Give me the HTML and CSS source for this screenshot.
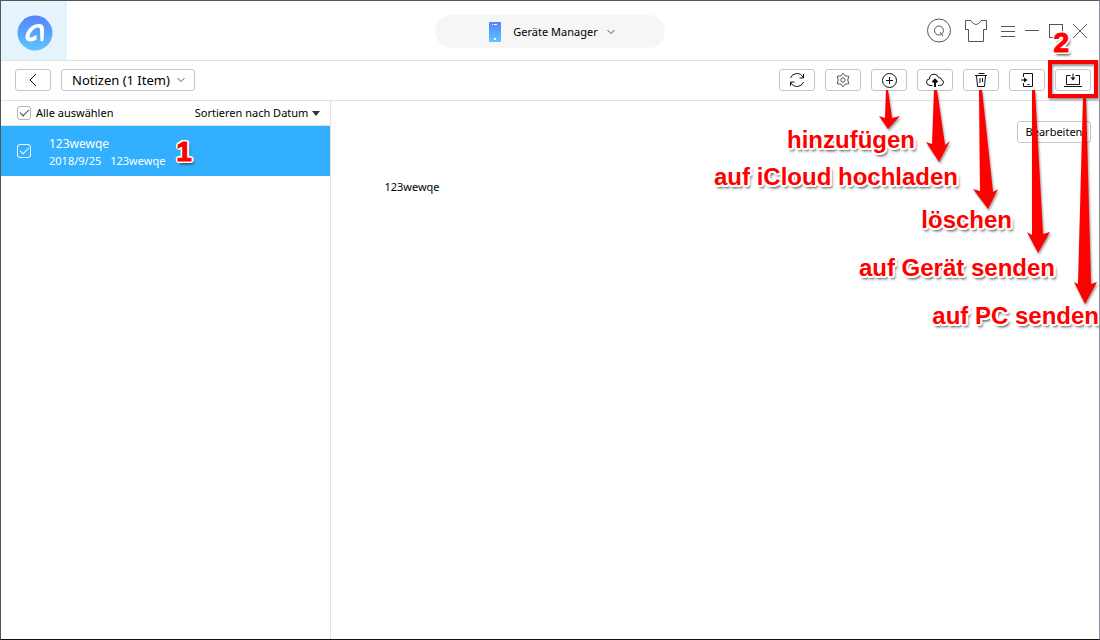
FILE: index.html
```
<!DOCTYPE html>
<html lang="de">
<head>
<meta charset="utf-8">
<title>Geräte Manager</title>
<link rel="stylesheet" href="styles.css">
</head>
<body>
<div class="window">
  <header class="titlebar">
    <div class="brand">
      <svg class="logo" viewBox="0 0 36 36" aria-hidden="true">
        <defs><linearGradient id="blue" x1="0" y1="0" x2="0" y2="1"><stop offset="0" stop-color="#5583fb"/><stop offset="1" stop-color="#5dc5ff"/></linearGradient></defs>
        <circle cx="18" cy="18" r="17.5" fill="url(#blue)"/>
        <path fill="#fff" fill-rule="evenodd" d="M8.500 22C9 15 15 9 22 9C25.500 9 27 11 27 15L26.500 25.500Q25.500 27 23.500 26L23 14Q22.500 12 20.500 12.500C16.500 13.500 13 18 12.500 21.500Q12.500 23 14 22.500L19.500 20V24.500Q16 27 12 26.300Q8 25.500 8.500 22Z"/>
      </svg>
    </div>
    <button class="device">
      <svg class="phone" viewBox="0 0 12 20" aria-hidden="true"><rect width="12" height="20" rx="1" fill="url(#blue)"/><path d="M3 2.500h1M5 2.500h3" stroke="#fff"/><rect x="5" y="16" width="2" height="2" fill="#fff"/></svg>
      <span>Geräte Manager</span>
      <svg class="chevron" viewBox="0 0 8 6" aria-hidden="true"><path d="M.5 1L4 4.500 7.500 1"/></svg>
    </button>
    <div class="window-tools">
      <button class="plain" aria-label="Konto"><svg width="26" height="26" viewBox="0 0 26 26"><circle cx="13" cy="12.500" r="11.500"/><circle cx="13" cy="12.500" r="4.500"/><path d="M14 14l3 4"/></svg></button>
      <button class="plain" aria-label="Design"><svg width="24" height="24" viewBox="0 0 24 24"><path d="M1.500 1.500H7Q9 5.500 12 5.500T17 1.500h5.500v9H19.500v12h-15v-12h-3z"/></svg></button>
      <button class="plain" aria-label="Menü"><svg width="16" height="16" viewBox="0 0 16 16"><path d="M1 3.500h14M1 8.500h14M1 13.500h14"/></svg></button>
      <button class="plain" aria-label="Minimieren"><svg width="16" height="16" viewBox="0 0 16 16"><path d="M1 7.500h14"/></svg></button>
      <button class="plain" aria-label="Maximieren"><svg width="16" height="16" viewBox="0 0 16 16"><rect x="1.500" y="1.500" width="13" height="13"/></svg></button>
      <button class="plain" aria-label="Schließen"><svg width="16" height="16" viewBox="0 0 16 16"><path d="M1 1l14 14M15 1L1 15"/></svg></button>
    </div>
  </header>

  <nav class="toolbar">
    <button class="tool" aria-label="Zurück"><svg viewBox="0 0 18 18"><path d="M12 3L6 9l6 6"/></svg></button>
    <button class="category"><span>Notizen (1 Item)</span><svg class="chevron" viewBox="0 0 8 6" aria-hidden="true"><path d="M.5 1L4 4.500 7.500 1"/></svg></button>
    <div class="actions">
      <button class="tool" aria-label="Aktualisieren"><svg viewBox="0 0 18 18"><path d="M2.500 7A6.800 6.800 0 0 1 15 6.300M15.500 11A6.800 6.800 0 0 1 3 11.700M15.500 3v4h-4M2.500 15v-4h4"/></svg></button>
      <button class="tool soft" aria-label="Einstellungen"><svg viewBox="0 0 18 18"><path d="M9 2.200L11 4.800 14.800 5.300 13.700 9l1.100 3.700-3.800.5L9 15.800 7 13.200l-3.800-.5L4.300 9 3.200 5.300 7 4.800z"/><circle cx="9" cy="9" r="2.200"/></svg></button>
      <button class="tool" aria-label="Hinzufügen"><svg viewBox="0 0 18 18"><circle cx="9.500" cy="9.500" r="7"/><path d="M6 9.500h7M9.500 6v7"/></svg></button>
      <button class="tool" aria-label="Auf iCloud hochladen"><svg viewBox="0 0 18 18"><path d="M6.500 14.500H4Q.5 14 .5 11T3.500 8Q3.500 3.500 8 3.200q3.500 0 4.500 3.300 3 0 3 2.200 2 .7 2 2.700 0 3.100-4 3.100H12"/><path class="bold" d="M9 16V9M6.500 11.200L9 8.700l2.500 2.500"/></svg></button>
      <button class="tool" aria-label="Löschen"><svg viewBox="0 0 18 18"><path d="M6.500 2.500h6M3 4.500h12M4.500 4.500l1 11h7l1-11M8 7v5M10.500 7v4"/></svg></button>
      <button class="tool" aria-label="Auf Gerät senden"><svg viewBox="0 0 18 18"><path d="M5.500 6V2.500h9v13h-9V12M9.500 13.500h2M3 9h5"/><path d="M6 6.500L9.500 9 6 11.500z" fill="#111" stroke="none"/></svg></button>
      <button class="tool" aria-label="Auf PC senden"><svg viewBox="0 0 18 18"><path d="M6.500 4.500h-4v9h13v-9h-4M0 15.500h18M9 2.500v5"/><path d="M6.500 6.500L9 9.500l2.500-3z" fill="#111" stroke="none"/></svg></button>
    </div>
  </nav>

  <main class="content">
    <section class="list">
      <div class="list-head">
        <label class="select-all"><input class="check" type="checkbox" checked><span>Alle auswählen</span></label>
        <button class="sort">Sortieren nach Datum<span class="caret"></span></button>
      </div>
      <label class="note">
        <input class="check light" type="checkbox" checked>
        <span class="note-text">
          <span class="note-title">123wewqe</span>
          <span class="note-meta"><span>2018/9/25</span><span>123wewqe</span></span>
        </span>
        <strong class="mark step">1</strong>
      </label>
    </section>
    <article class="detail">
      <button class="edit">Bearbeiten</button>
      <p class="note-body">123wewqe</p>
    </article>
  </main>

  <div class="callouts">
    <svg class="arrows" viewBox="0 0 400 340" aria-hidden="true">
      <path d="M186 90h2l4 28 8-2-12 13-9-13 6 2z"/>
      <path d="M234 90h3l8 55 5-4-11 21-13-20 6 2z"/>
      <path d="M279 90h3l11 102 5-3-10 20-15-20 7 2z"/>
      <path d="M332 90h3l8 144 7-2-12 21-11-21 5 3z"/>
      <path d="M383 98h3l5 186 6-2-12 22-11-22 4 2z"/>
      <rect class="frame" x="350" y="62" width="46" height="34"/>
    </svg>
    <strong class="mark two">2</strong>
    <strong class="mark add">hinzufügen</strong>
    <strong class="mark cloud">auf iCloud hochladen</strong>
    <strong class="mark delete">löschen</strong>
    <strong class="mark phone-send">auf Gerät senden</strong>
    <strong class="mark pc-send">auf PC senden</strong>
  </div>
</div>
</body>
</html>
```
FILE: styles.css
```
* { box-sizing: border-box; }
body { margin: 0; font: 11px/16px "Noto Sans", "Open Sans", sans-serif; color: #000; background: #fff; }
button { font: inherit; color: inherit; background: #fff; padding: 0; border: 0; }
svg { display: block; fill: none; stroke: #111; }

.window { position: relative; display: flex; flex-direction: column; min-height: 100vh; overflow: hidden; border: 1px solid #555459; border-right-color: #8b929c; border-bottom-color: #111; }

.titlebar { display: grid; grid-template-columns: 1fr auto 1fr; align-items: center; height: 60px; border-bottom: 1px solid #e2e2e2; }
.brand { display: flex; align-items: center; justify-content: center; width: 66px; height: 59px; padding: 4px 0 0 1px; background: #e5f3fd; }
.logo { width: 36px; height: 36px; stroke: none; }
.device { display: flex; align-items: center; justify-content: center; gap: 12px; width: 230px; height: 33px; margin-top: 2px; padding-left: 4px; border-radius: 17px; background: #f6f6f6; }
.device .chevron { margin-left: -3px; }
.phone { width: 12px; height: 20px; stroke: none; }
.chevron { width: 8px; height: 6px; stroke: #555; }
.window-tools { display: flex; align-items: center; justify-content: flex-end; gap: 8px; padding-right: 11px; }
.plain { background: none; }
.plain svg { stroke: #555; }
.plain:first-child { margin-right: 4px; }
.plain:nth-child(2) { margin-right: 4px; }

.toolbar { display: flex; align-items: center; gap: 10px; height: 40px; padding: 0 8px 1px 14px; border-bottom: 1px solid #e2e2e2; }
.tool, .category, .edit { height: 22px; border: 1px solid #c6c6c6; border-radius: 3px; }
.tool { display: flex; align-items: center; justify-content: center; width: 36px; }
.tool svg { width: 18px; height: 18px; }
.soft svg { stroke: #555; }
.bold { stroke-width: 2; }
.category { display: flex; align-items: center; gap: 7px; padding: 0 9px 0 10px; font-size: 13px; }
.actions { display: flex; gap: 10px; margin-left: auto; }

.content { display: flex; flex: 1; }
.list { width: calc(30% + 1px); border-right: 1px solid #e2e2e2; }
.list-head { display: flex; align-items: center; justify-content: space-between; height: 25px; padding: 0 10px 0 16px; border-bottom: 1px solid #e2e2e2; }
.select-all { display: flex; align-items: center; gap: 5px; }
.check { appearance: none; display: grid; place-items: center; width: 14px; height: 14px; margin: 0; border: 1px solid #b5b5b5; border-radius: 3px; color: #444; }
.check:checked::before { content: ""; width: 8px; height: 4px; margin-bottom: 3px; border: solid currentColor; border-width: 0 0 1px 1px; rotate: -45deg; }
.light { border-color: #fff; color: #fff; }
.sort { display: flex; align-items: center; gap: 4px; }
.caret { border: 4px solid transparent; border-top: 5px solid #333; border-bottom: 0; }
.note { display: flex; align-items: center; height: 50px; padding-left: 16px; background: #32affe; color: #fff; }
.note-text { display: flex; flex-direction: column; margin-left: 18px; padding-top: 1px; }
.note-title { font-size: 12px; line-height: 18px; }
.note-meta { display: flex; gap: 9px; }

.detail { display: flex; flex: 1; flex-direction: column; padding: 20px 8px 20px 53px; }
.edit { align-self: flex-end; width: 74px; }
.note-body { margin: 36px 0 0; }

.mark { font: bold 24px/28px "Liberation Sans", Arial, sans-serif; color: #f00; white-space: nowrap;
  text-shadow: 0 -2px 0 #fff, 0 2px 0 #fff, -2px 0 0 #fff, 2px 0 0 #fff, -1px -2px 0 #fff, 1px -2px 0 #fff, -2px -1px 0 #fff, 2px -1px 0 #fff, -2px 1px 0 #fff, 2px 1px 0 #fff, -1px 2px 0 #fff, 1px 2px 0 #fff, 2px 3px 3px #333; }
.step, .two { font-size: 28px; -webkit-text-stroke: 1px #f00; }
.step { margin-left: 11px; padding-top: 2px; }
.callouts { position: absolute; top: -1px; right: -1px; width: 400px; height: 340px; overflow: hidden; pointer-events: none; }
.callouts .mark { position: absolute; }
.arrows { width: 400px; height: 340px; fill: #f00; stroke: none; filter: drop-shadow(1px 2px 1px #0006); }
.arrows .frame { fill: none; stroke: #f00; stroke-width: 4px; }
.two { top: 29px; right: 31px; }
.add { top: 126px; right: 185px; }
.cloud { top: 163px; right: 142px; }
.delete { top: 206px; right: 88px; }
.phone-send { top: 254px; right: 45px; }
.pc-send { top: 302px; right: 1px; }
```
